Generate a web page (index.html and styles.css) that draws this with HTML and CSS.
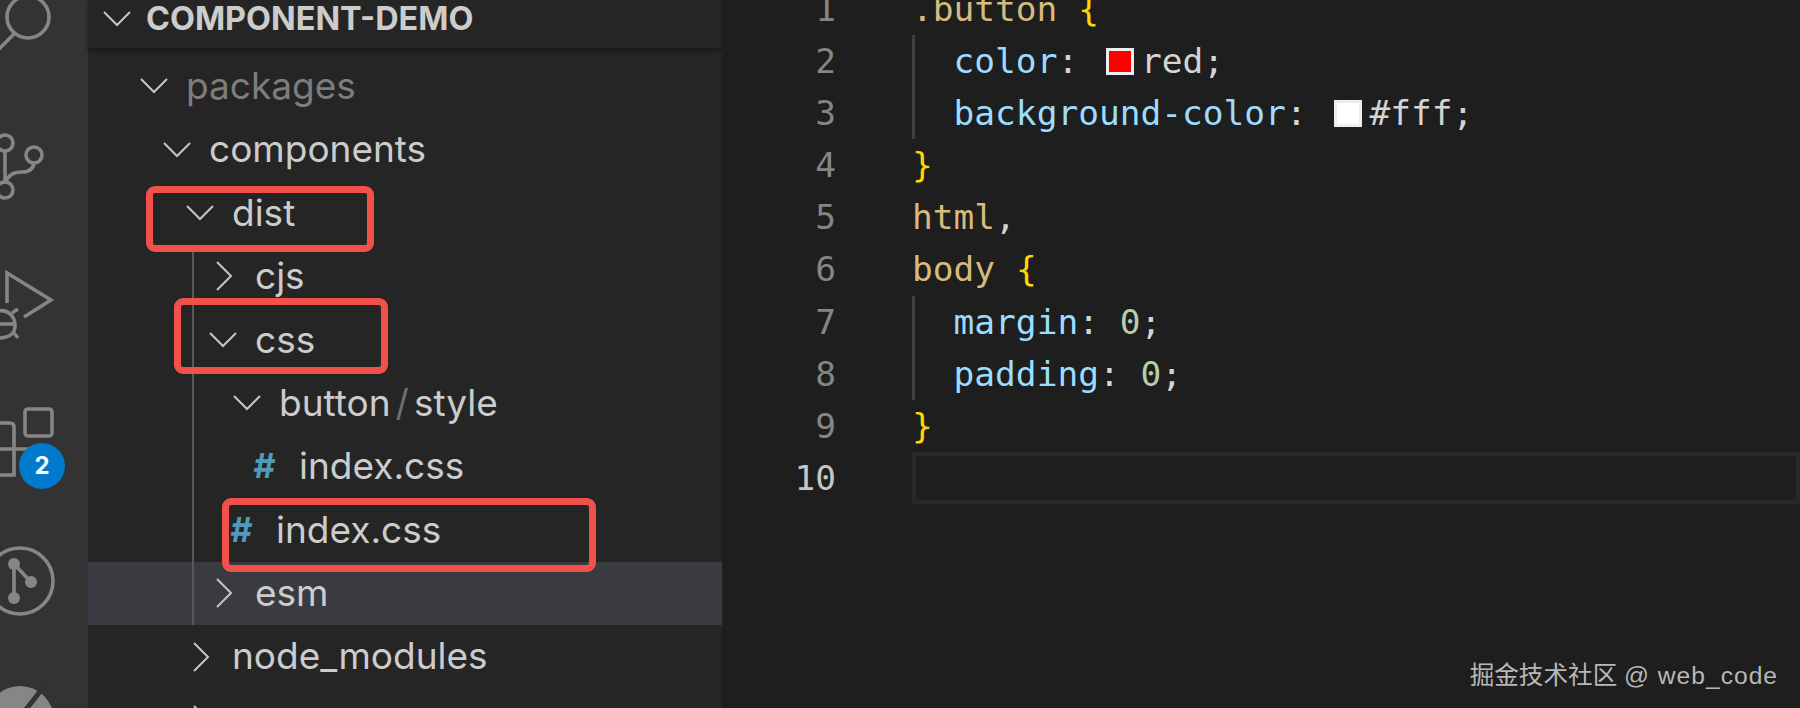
FILE: index.html
```html
<!DOCTYPE html>
<html lang="en">
<head>
<meta charset="utf-8">
<title>component-demo</title>
<link rel="stylesheet" href="styles.css">
</head>
<body>
<div class="window">
  <nav class="activity">
    <svg class="slot" viewBox="0 -54 88 141"><circle cx="28" cy="17" r="21"/><path d="M14 34 L-4 52"/></svg>
    <svg class="slot" viewBox="0 87 88 141"><circle cx="5" cy="143" r="8"/><circle cx="5" cy="190" r="8"/><circle cx="34" cy="155" r="8"/><path d="M5 151 V182 M34 163 C33 170 28 172 22 172 C14 172 8 175 6 182"/></svg>
    <svg class="slot" viewBox="0 228 88 141"><path d="M7 303 V273 L51 300 L24 317"/><path d="M-2 311 C8 309 15 316 15 326 C15 334 8 338 -2 338 M-2 324 H16 M12 313 L18 309 M14 333 L18 338"/></svg>
    <div class="slot-wrap">
      <svg class="slot" viewBox="0 369 88 141"><rect x="25" y="409" width="27" height="27" rx="3"/><path d="M-4 423 H10 Q14 423 14 427 V475 H-4 M-4 449 H32"/></svg>
      <span class="badge">2</span>
    </div>
    <svg class="slot" viewBox="0 510 88 141"><circle cx="20" cy="581" r="33"/><path d="M14 564 V598 M14 564 L31 582"/><circle class="dot" cx="14" cy="564" r="6"/><circle class="dot" cx="31" cy="582" r="6"/><circle class="dot" cx="14" cy="598" r="6"/></svg>
    <svg class="slot" viewBox="0 651 88 141"><circle class="dot" cx="20" cy="720" r="34"/><path class="cut" d="M46 684 L24 712"/></svg>
  </nav>

  <aside class="sidebar">
    <header class="side-head">
      <svg class="twist" viewBox="0 0 28 16"><path d="M1 1 L14 14 L27 1"/></svg>
      <span class="side-title">COMPONENT-DEMO</span>
    </header>
    <div class="row d0 muted"><svg class="twist" viewBox="0 0 28 16"><path d="M1 1 L14 14 L27 1"/></svg><span class="name">packages</span></div>
    <div class="row d1"><svg class="twist" viewBox="0 0 28 16"><path d="M1 1 L14 14 L27 1"/></svg><span class="name">components</span></div>
    <div class="row d2"><svg class="twist" viewBox="0 0 28 16"><path d="M1 1 L14 14 L27 1"/></svg><span class="name">dist</span></div>
    <div class="guided">
      <div class="row d3"><svg class="twist side" viewBox="0 0 28 30"><path d="M8 1 L22 15 L8 29"/></svg><span class="name">cjs</span></div>
      <div class="row d3"><svg class="twist" viewBox="0 0 28 16"><path d="M1 1 L14 14 L27 1"/></svg><span class="name">css</span></div>
      <div class="row d4"><svg class="twist" viewBox="0 0 28 16"><path d="M1 1 L14 14 L27 1"/></svg><span class="name">button<i class="sep">/</i>style</span></div>
      <div class="row d5"><b class="hash">#</b><span class="name">index.css</span></div>
      <div class="row d4f"><b class="hash">#</b><span class="name">index.css</span></div>
      <div class="row d3 hover"><svg class="twist side" viewBox="0 0 28 30"><path d="M8 1 L22 15 L8 29"/></svg><span class="name">esm</span></div>
    </div>
    <div class="row d2"><svg class="twist side" viewBox="0 0 28 30"><path d="M8 1 L22 15 L8 29"/></svg><span class="name">node_modules</span></div>
    <div class="row d2"><svg class="twist side" viewBox="0 0 28 30"><path d="M8 1 L22 15 L8 29"/></svg></div>
    <div class="mark mark-dist"></div>
    <div class="mark mark-css"></div>
    <div class="mark mark-index"></div>
  </aside>

  <main class="editor">
    <div class="line"><span class="num">1</span><code class="code"><span class="sel">.button</span> <span class="brace">{</span></code></div>
    <div class="line in"><span class="num">2</span><code class="code">  <span class="prop">color</span>: <i class="swatch swatch-red"></i>red;</code></div>
    <div class="line in"><span class="num">3</span><code class="code">  <span class="prop">background-color</span>: <i class="swatch swatch-white"></i>#fff;</code></div>
    <div class="line"><span class="num">4</span><code class="code"><span class="brace">}</span></code></div>
    <div class="line"><span class="num">5</span><code class="code"><span class="sel">html</span>,</code></div>
    <div class="line"><span class="num">6</span><code class="code"><span class="sel">body</span> <span class="brace">{</span></code></div>
    <div class="line in"><span class="num">7</span><code class="code">  <span class="prop">margin</span>: <span class="val">0</span>;</code></div>
    <div class="line in"><span class="num">8</span><code class="code">  <span class="prop">padding</span>: <span class="val">0</span>;</code></div>
    <div class="line"><span class="num">9</span><code class="code"><span class="brace">}</span></code></div>
    <div class="line current"><span class="num">10</span><code class="code"></code></div>
    <div class="watermark">掘金技术社区 <span class="wm-latin">@ web_code</span></div>
  </main>
</div>
</body>
</html>
```
FILE: styles.css
```css
html, body {
  margin: 0;
  height: 100%;
  overflow: hidden;
  background: #1e1e1e;
}

.window {
  display: flex;
  width: 1800px;
  height: 708px;
  overflow: hidden;
}

/* Activity bar */
.activity {
  flex: 0 0 88px;
  display: flex;
  flex-direction: column;
  margin-top: -54px;
  background: #333333;
}

.slot {
  display: block;
  flex: 0 0 141px;
  width: 88px;
  height: 141px;
  overflow: hidden;
  fill: none;
  stroke: #868686;
  stroke-width: 3.6;
}

.slot .dot {
  fill: #868686;
  stroke: none;
}

.slot .cut {
  stroke: #333333;
  stroke-width: 5;
}

.slot-wrap {
  position: relative;
  flex: 0 0 141px;
}

.badge {
  position: absolute;
  left: 19px;
  top: 74px;
  width: 46px;
  height: 46px;
  border-radius: 50%;
  background: #007acc;
  color: #ffffff;
  font: 700 24px/46px "Inter", "Liberation Sans", sans-serif;
  text-align: center;
}

/* Explorer */
.sidebar {
  position: relative;
  flex: 0 0 634px;
  background: #252526;
  color: #cccccc;
  font: 400 37px "Inter", "Liberation Sans", sans-serif;
}

.side-head {
  display: flex;
  align-items: center;
  height: 37px;
  padding: 0 0 11px 15px;
  margin-bottom: 6.5px;
  box-shadow: 0 3px 3px #1a1a1a;
}

.side-title {
  margin-left: -3px;
  font-size: 32.4px;
  line-height: 37px;
  font-weight: 700;
}

.twist {
  flex: 0 0 28px;
  width: 28px;
  height: 16px;
  margin-right: 18px;
  fill: none;
  stroke: #c5c5c5;
  stroke-width: 2;
}

.twist.side {
  height: 30px;
}

.row {
  display: flex;
  align-items: center;
  height: 63.4px;
  white-space: nowrap;
}

.name {
  padding-bottom: 1.5px;
}

.d0 { padding-left: 52px; }
.d1 { padding-left: 75px; }
.d2 { padding-left: 98px; }
.d3 { padding-left: 121px; }
.d4 { padding-left: 145px; }
.d4f { padding-left: 142px; }
.d5 { padding-left: 165px; }

.muted { color: #7d7d7d; }

.hover { background: #3a3a41; }

.guided {
  position: relative;
}

.guided::before {
  content: "";
  position: absolute;
  left: 104px;
  top: 7px;
  bottom: 0;
  width: 2px;
  background: #585858;
}

.sep {
  margin: 0 5px;
  color: #6f6f6f;
  font-style: normal;
}

.hash {
  flex: 0 0 26px;
  margin-right: 20px;
  padding-bottom: 1.5px;
  color: #519aba;
  font-size: 34px;
  font-style: italic;
  font-weight: 700;
}

/* Red annotation boxes */
.mark {
  position: absolute;
  box-sizing: border-box;
  border: 7px solid #f2504b;
  border-radius: 9px;
}

.mark-dist { left: 58px; top: 186px; width: 228px; height: 66px; }
.mark-css { left: 86px; top: 298px; width: 214px; height: 76px; }
.mark-index { left: 134px; top: 498px; width: 374px; height: 74px; }

/* Editor */
.editor {
  position: relative;
  flex: 1 1 auto;
  margin-top: -17px;
  background: #1e1e1e;
  font: 400 34.5px "DejaVu Sans Mono", "Liberation Mono", monospace;
  color: #d4d4d4;
}

.line {
  display: flex;
  height: 52.1px;
  line-height: 52.1px;
}

.num {
  flex: 0 0 114px;
  color: #858585;
  text-align: right;
}

.code {
  flex: 1 1 auto;
  margin-left: 76px;
  font: inherit;
  white-space: pre;
}

.in .code {
  box-shadow: inset 3px 0 #404040;
}

.current .num {
  color: #c6c6c6;
}

.current .code {
  box-sizing: border-box;
  box-shadow: inset 0 0 0 4px #282828;
}

.sel { color: #d7ba7d; }
.brace { color: #ffd700; }
.prop { color: #9cdcfe; }
.val { color: #b5cea8; }

.swatch {
  display: inline-block;
  box-sizing: border-box;
  width: 28px;
  height: 27px;
  margin: 0 7px 0 7px;
  border: 3px solid #eeeeee;
  vertical-align: -2px;
}

.swatch-red { background: #ff0000; }
.swatch-white { background: #ffffff; }

.watermark {
  position: absolute;
  right: 22px;
  bottom: 17px;
  color: #b8b8b8;
  font: 400 24.6px "Liberation Sans", "Noto Sans CJK SC", sans-serif;
  white-space: nowrap;
}

.wm-latin {
  letter-spacing: 1px;
}
```
